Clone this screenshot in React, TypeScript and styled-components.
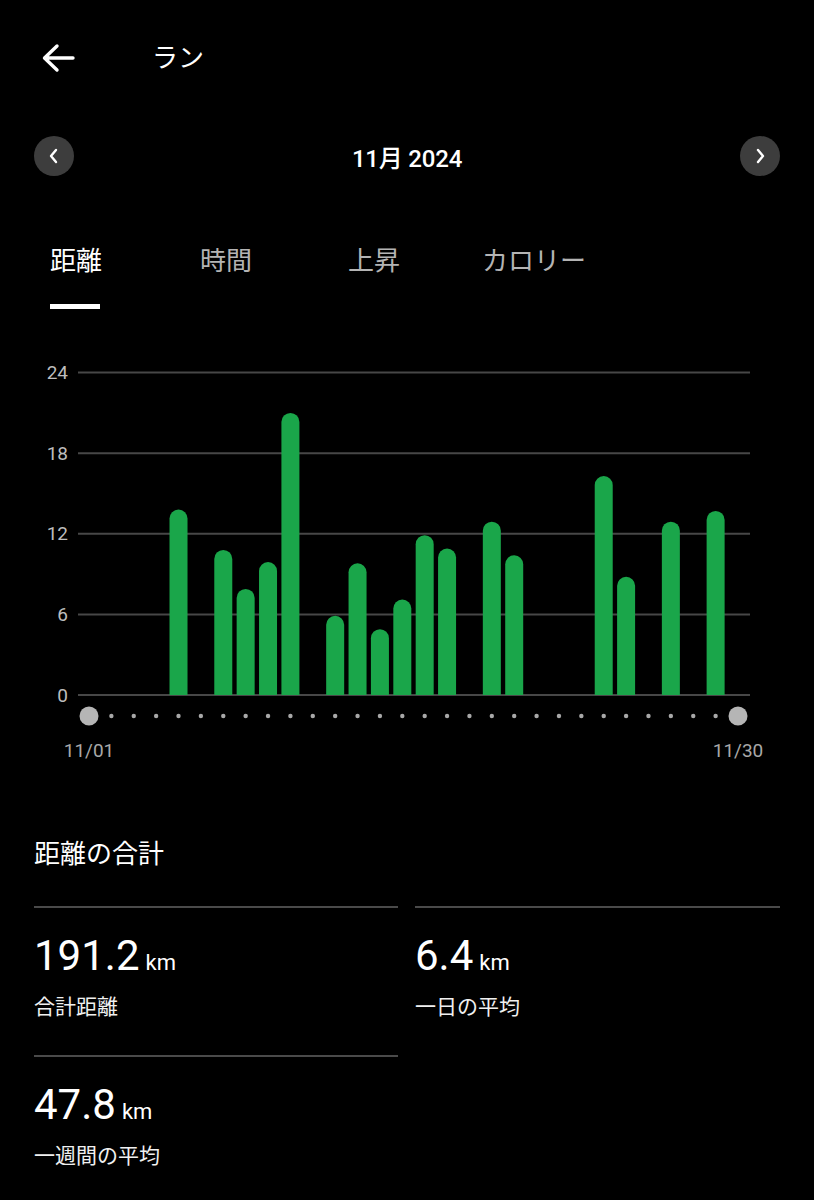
import styled, { createGlobalStyle } from "styled-components"

const GlobalStyle = createGlobalStyle`
  html, body {
    margin: 0;
    padding: 0;
    background: #000;
  }
  body {
    font-family: Roboto, "Noto Sans CJK JP", sans-serif;
  }
`

const days = 30
const data: { [day: number]: number } = {
  5: 13.8, 7: 10.8, 8: 7.9, 9: 9.9, 10: 21.0,
  12: 5.9, 13: 9.8, 14: 4.9, 15: 7.1, 16: 11.9, 17: 10.9,
  19: 12.9, 20: 10.4, 24: 16.3, 25: 8.8, 27: 12.9, 29: 13.7,
}

const tabs = ["距離", "時間", "上昇", "カロリー"]

const stats = [
  { value: "191.2", label: "合計距離" },
  { value: "6.4", label: "一日の平均" },
  { value: "47.8", label: "一週間の平均" },
]

const Page = styled.div`
  width: 814px;
  min-height: 1200px;
  background: #000;
  color: #fff;
  display: flex;
  flex-direction: column;
`

const Header = styled.header`
  height: 116px;
  display: flex;
  align-items: center;
  padding-left: 41px;
`

const BackButton = styled.button`
  background: none;
  border: none;
  padding: 0;
  display: flex;
  cursor: pointer;
`

const Title = styled.h1`
  margin: 0 0 0 77px;
  font-size: 26px;
  font-weight: 400;
  line-height: 30px;
`

const MonthNav = styled.div`
  height: 80px;
  display: flex;
  align-items: center;
  justify-content: space-between;
  padding: 0 34px;
`

const RoundButton = styled.button`
  width: 40px;
  height: 40px;
  border-radius: 50%;
  border: none;
  background: #3d3d3d;
  display: flex;
  align-items: center;
  justify-content: center;
  padding: 0;
  cursor: pointer;
`

const MonthLabel = styled.div`
  font-size: 24px;
  font-weight: 500;
  letter-spacing: -0.2px;
`

const TabRow = styled.nav`
  margin-top: 50px;
  padding-left: 50px;
  display: grid;
  grid-template-columns: 150px 148px 134px auto;
`

const Tab = styled.div<{ $active?: boolean }>`
  display: flex;
  flex-direction: column;
  align-items: flex-start;
  font-size: 26px;
  line-height: 30px;
  color: ${(p) => (p.$active ? "#fff" : "#b4b4b4")};

  &::after {
    content: "";
    width: 50px;
    height: 5px;
    margin-top: 28px;
    background: ${(p) => (p.$active ? "#fff" : "transparent")};
  }
`

const ChartWrap = styled.div`
  margin-top: 41px;
  height: 430px;
`

const Summary = styled.section`
  margin-top: 59px;
  padding: 0 34px;
`

const SectionTitle = styled.h2`
  margin: 0;
  font-size: 26px;
  font-weight: 400;
  line-height: 30px;
`

const StatGrid = styled.div`
  margin-top: 37px;
  display: grid;
  grid-template-columns: 364px 365px;
  column-gap: 17px;
  row-gap: 34px;
`

const StatCell = styled.div`
  border-top: 2px solid #4a4a4a;
  padding-top: 23px;
`

const Value = styled.div`
  font-size: 42px;
  line-height: 50px;
  display: flex;
  align-items: baseline;
  gap: 6px;
`

const Unit = styled.span`
  font-size: 22px;
`

const StatLabel = styled.div`
  margin-top: 5px;
  font-size: 21px;
  line-height: 28px;
  color: #f0f0f0;
`

const Chart = () => {
  const zeroY = 345
  const unit = 80.6 / 6
  const firstX = 89
  const step = (738 - 89) / (days - 1)
  const barW = 18
  const r = barW / 2
  const ticks = [0, 6, 12, 18, 24]

  return (
    <svg width="814" height="430" viewBox="0 0 814 430">
      {ticks.map((t) => {
        const y = zeroY - t * unit
        return (
          <g key={t}>
            <line x1="78" x2="750" y1={y} y2={y} stroke="#474747" strokeWidth="2" />
            <text
              x="68"
              y={y}
              textAnchor="end"
              dominantBaseline="central"
              fontSize="19"
              fill="#bdbdbd"
              fontFamily="Roboto, sans-serif"
            >
              {t}
            </text>
          </g>
        )
      })}
      {Object.entries(data).map(([d, v]) => {
        const cx = firstX + (Number(d) - 1) * step
        const x0 = cx - r
        const x1 = cx + r
        const top = zeroY - v * unit
        return (
          <path
            key={d}
            d={`M${x0} ${zeroY} V${top + r} A${r} ${r} 0 0 1 ${x1} ${top + r} V${zeroY} Z`}
            fill="#1aa64a"
          />
        )
      })}
      {Array.from({ length: days }, (_, i) => {
        const cx = firstX + i * step
        const big = i === 0 || i === days - 1
        return <circle key={i} cx={cx} cy="366" r={big ? 9.5 : 2.2} fill={big ? "#b5b5b5" : "#a8a8a8"} />
      })}
      <text x={firstX} y="400" textAnchor="middle" dominantBaseline="central" fontSize="19" fill="#a8a8a8" fontFamily="Roboto, sans-serif">
        11/01
      </text>
      <text x="738" y="400" textAnchor="middle" dominantBaseline="central" fontSize="19" fill="#a8a8a8" fontFamily="Roboto, sans-serif">
        11/30
      </text>
    </svg>
  )
}

const App = () => {
  return (
    <Page>
      <GlobalStyle />
      <Header>
        <BackButton aria-label="back">
          <svg width="34" height="30" viewBox="0 0 34 30">
            <path d="M32 15 H4 M16 3 L3.5 15 L16 27" fill="none" stroke="#fff" strokeWidth="3.4" strokeLinecap="round" strokeLinejoin="round" />
          </svg>
        </BackButton>
        <Title>ラン</Title>
      </Header>
      <MonthNav>
        <RoundButton aria-label="previous">
          <svg width="12" height="16" viewBox="0 0 12 16">
            <path d="M8 2 L3 8 L8 14" fill="none" stroke="#fff" strokeWidth="2.4" strokeLinecap="round" strokeLinejoin="round" />
          </svg>
        </RoundButton>
        <MonthLabel>11月 2024</MonthLabel>
        <RoundButton aria-label="next">
          <svg width="12" height="16" viewBox="0 0 12 16">
            <path d="M4 2 L9 8 L4 14" fill="none" stroke="#fff" strokeWidth="2.4" strokeLinecap="round" strokeLinejoin="round" />
          </svg>
        </RoundButton>
      </MonthNav>
      <TabRow>
        {tabs.map((t, i) => (
          <Tab key={t} $active={i === 0}>{t}</Tab>
        ))}
      </TabRow>
      <ChartWrap>
        <Chart />
      </ChartWrap>
      <Summary>
        <SectionTitle>距離の合計</SectionTitle>
        <StatGrid>
          {stats.map((s) => (
            <StatCell key={s.label}>
              <Value>
                {s.value}
                <Unit>km</Unit>
              </Value>
              <StatLabel>{s.label}</StatLabel>
            </StatCell>
          ))}
        </StatGrid>
      </Summary>
    </Page>
  )
}

export default App
